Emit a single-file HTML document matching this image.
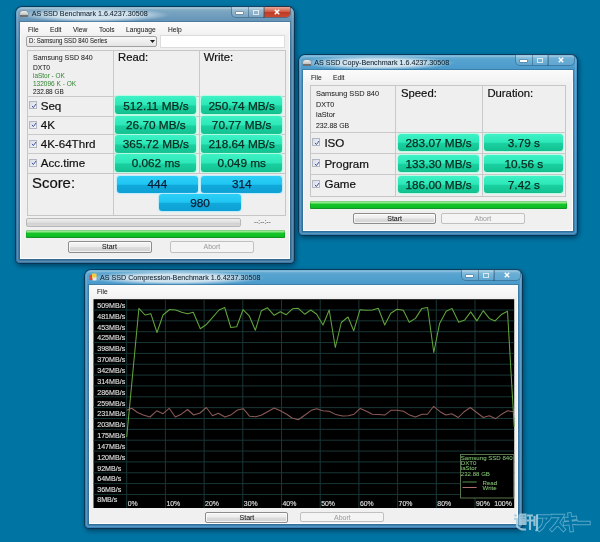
<!DOCTYPE html><html><head><meta charset="utf-8"><style>html,body{margin:0;padding:0;}body{width:600px;height:542px;overflow:hidden;position:relative;background:#0075a4;font-family:"Liberation Sans", sans-serif;}.t{position:absolute;white-space:nowrap;-webkit-text-stroke:0.2px currentColor;}</style></head><body><div style="position:absolute;left:0;top:0;width:600px;height:542px;filter:blur(0.3px)">
<div style="position:absolute;left:16px;top:7px;width:278px;height:256px;border-radius:6px 6px 4px 4px;box-shadow:1px 2px 5px 1px rgba(0,25,50,0.55);"></div>
<div style="position:absolute;left:16px;top:7px;width:278px;height:256px;border-radius:6px 6px 4px 4px;background:linear-gradient(to bottom,#9cbcd0 0px,#7ca6c2 4px,#6494b8 14px,#5088b0 40px,#3e78a2 100%);box-shadow:0 0 0 1px rgba(10,45,75,0.75);"></div>
<div style="position:absolute;left:18px;top:8px;width:152px;height:14px;border-radius:7px;background:radial-gradient(ellipse closest-side at center,rgba(215,230,240,0.95) 55%,rgba(215,230,240,0) 100%);"></div>
<div style="position:absolute;left:17px;top:8px;width:276px;height:254px;border-radius:5px 5px 3px 3px;box-shadow:inset 0 0 0 1px rgba(255,255,255,0.15);"></div>
<div style="position:absolute;left:20px;top:22px;width:270px;height:237px;background:#f0f0f0;box-shadow:inset 0 0 0 1px rgba(255,255,255,0.9),0 0 0 1px rgba(30,70,100,0.30);"></div>
<div style="position:absolute;left:20px;top:11px;width:8px;height:5px;border-radius:3px 3px 1px 1px;background:linear-gradient(#eeeeee,#b4b4b4);box-shadow:0 0 0 0.5px #888;"></div>
<div style="position:absolute;left:20px;top:15px;width:8px;height:2px;background:#707070;"></div>
<div class="t" style="left:31.70px;top:11.35px;font-size:7.15px;line-height:7.15px;color:#0e1e2a;-webkit-text-stroke:0.05px currentColor;">AS SSD Benchmark 1.6.4237.30508</div>
<div style="position:absolute;left:264px;top:7px;width:26px;height:10px;border-radius:0 0 4px 0;background:linear-gradient(#e8a898,#d06048 45%,#c03c28 55%,#c84a30);box-shadow:0 0 0 1px rgba(80,40,40,0.45);"></div>
<div style="position:absolute;left:232px;top:7px;width:32px;height:10px;border-radius:0 0 0 4px;background:linear-gradient(rgba(255,255,255,0.28),rgba(255,255,255,0.08));box-shadow:0 0 0 1px rgba(40,80,110,0.45);"></div>
<div style="position:absolute;left:248px;top:7px;width:0px;height:10px;border-left:1px solid rgba(40,80,110,0.45);"></div>
<svg style="position:absolute;left:273.0px;top:8px" width="8" height="8" viewBox="0 0 8 8"><path d="M1.8 1.8L6.2 6.2M6.2 1.8L1.8 6.2" stroke="#fff" stroke-width="1.5"/></svg>
<div style="position:absolute;left:253.0px;top:9.5px;width:4px;height:3px;border:1px solid rgba(255,255,255,0.7);"></div>
<div style="position:absolute;left:236.0px;top:12px;width:7px;height:2px;background:#fff;box-shadow:0 0 0 0.5px rgba(40,60,80,0.5);"></div>
<div style="position:absolute;left:20px;top:22px;width:270px;height:12px;background:linear-gradient(#fbfbfb,#f3f3f3);"></div>
<div class="t" style="left:28.30px;top:25.54px;font-size:7.4px;line-height:7.4px;color:#1a1a1a;transform:scaleX(0.9);transform-origin:left top;-webkit-text-stroke:0.05px currentColor;">File</div>
<div class="t" style="left:50.00px;top:25.54px;font-size:7.4px;line-height:7.4px;color:#1a1a1a;transform:scaleX(0.9);transform-origin:left top;-webkit-text-stroke:0.05px currentColor;">Edit</div>
<div class="t" style="left:72.50px;top:25.54px;font-size:7.4px;line-height:7.4px;color:#1a1a1a;transform:scaleX(0.9);transform-origin:left top;-webkit-text-stroke:0.05px currentColor;">View</div>
<div class="t" style="left:99.00px;top:25.54px;font-size:7.4px;line-height:7.4px;color:#1a1a1a;transform:scaleX(0.9);transform-origin:left top;-webkit-text-stroke:0.05px currentColor;">Tools</div>
<div class="t" style="left:125.80px;top:25.54px;font-size:7.4px;line-height:7.4px;color:#1a1a1a;transform:scaleX(0.9);transform-origin:left top;-webkit-text-stroke:0.05px currentColor;">Language</div>
<div class="t" style="left:167.50px;top:25.54px;font-size:7.4px;line-height:7.4px;color:#1a1a1a;transform:scaleX(0.9);transform-origin:left top;-webkit-text-stroke:0.05px currentColor;">Help</div>
<div style="position:absolute;left:26px;top:36px;width:129px;height:9px;border:1px solid #a0a0a0;border-radius:2px;background:linear-gradient(#f8f8f8,#e4e4e4);"></div>
<div class="t" style="left:29.20px;top:37.71px;font-size:6.6px;line-height:6.6px;color:#1a1a1a;transform:scaleX(0.92);transform-origin:left top;-webkit-text-stroke:0.05px currentColor;">D: Samsung SSD 840 Series</div>
<svg style="position:absolute;left:150px;top:39.5px" width="5" height="3" viewBox="0 0 5 3"><path d="M0 0H5L2.5 3Z" fill="#1a1a1a"/></svg>
<div style="position:absolute;left:160px;top:35px;width:123px;height:11px;border:1px solid #dcdcdc;background:#fff;"></div>
<div style="position:absolute;left:27px;top:50px;width:257px;height:122px;border:1px solid #c6c6c6;background:#efefef;"></div>
<div style="position:absolute;left:113px;top:50px;width:1px;height:123px;background:#c9c9c9;"></div>
<div style="position:absolute;left:199px;top:50px;width:1px;height:123px;background:#c9c9c9;"></div>
<div style="position:absolute;left:27px;top:96px;width:258px;height:1px;background:#c9c9c9;"></div>
<div style="position:absolute;left:27px;top:115.5px;width:258px;height:1px;background:#c9c9c9;"></div>
<div style="position:absolute;left:27px;top:134px;width:258px;height:1px;background:#c9c9c9;"></div>
<div style="position:absolute;left:27px;top:153px;width:258px;height:1px;background:#c9c9c9;"></div>
<div class="t" style="left:32.50px;top:53.74px;font-size:7.4px;line-height:7.4px;color:#222;transform:scaleX(0.95);transform-origin:left top;-webkit-text-stroke:0.05px currentColor;">Samsung SSD 840</div>
<div class="t" style="left:32.50px;top:63.74px;font-size:7.4px;line-height:7.4px;color:#222;transform:scaleX(0.9);transform-origin:left top;-webkit-text-stroke:0.05px currentColor;">DXT0</div>
<div class="t" style="left:32.50px;top:71.74px;font-size:7.4px;line-height:7.4px;color:#3a8a3a;transform:scaleX(0.87);transform-origin:left top;-webkit-text-stroke:0.05px currentColor;">iaStor - OK</div>
<div class="t" style="left:32.50px;top:79.74px;font-size:7.4px;line-height:7.4px;color:#3a8a3a;transform:scaleX(0.88);transform-origin:left top;-webkit-text-stroke:0.05px currentColor;">132096 K - OK</div>
<div class="t" style="left:32.50px;top:87.54px;font-size:7.4px;line-height:7.4px;color:#222;transform:scaleX(0.87);transform-origin:left top;-webkit-text-stroke:0.05px currentColor;">232.88 GB</div>
<div class="t" style="left:118.00px;top:52.23px;font-size:11.3px;line-height:11.3px;color:#111;">Read:</div>
<div class="t" style="left:203.80px;top:52.23px;font-size:11.3px;line-height:11.3px;color:#111;">Write:</div>
<div style="position:absolute;left:30.0px;top:102.3px;width:6px;height:6px;background:linear-gradient(135deg,#d6dbe4,#f6f7f9);box-shadow:0 0 0 1px #b0b6c2;"></div>
<svg style="position:absolute;left:29.5px;top:101.8px" width="8" height="8" viewBox="0 0 8 8"><path d="M2 3.9L3.4 5.6L6 2" fill="none" stroke="#4252a0" stroke-width="1.0"/></svg>
<div class="t" style="left:40.70px;top:99.88px;font-size:11.6px;line-height:11.6px;color:#111;">Seq</div>
<div style="position:absolute;left:115.3px;top:96.3px;width:81.2px;height:18.0px;border-radius:3px;background:linear-gradient(to bottom,#3ef2c6 0%,#2de8b9 48%,#1ad0a0 56%,#14c493 92%,#12b888 100%);box-shadow:0 0 1px 1px rgba(170,255,225,0.85);"></div>
<div class="t" style="left:115.30px;top:100.68px;width:81.2px;text-align:center;font-size:11.8px;line-height:11.8px;color:#0a2a1e;-webkit-text-stroke:0.25px #0a2a1e;">512.11 MB/s</div>
<div style="position:absolute;left:201.4px;top:96.3px;width:80.6px;height:18.0px;border-radius:3px;background:linear-gradient(to bottom,#3ef2c6 0%,#2de8b9 48%,#1ad0a0 56%,#14c493 92%,#12b888 100%);box-shadow:0 0 1px 1px rgba(170,255,225,0.85);"></div>
<div class="t" style="left:201.40px;top:100.68px;width:80.6px;text-align:center;font-size:11.8px;line-height:11.8px;color:#0a2a1e;-webkit-text-stroke:0.25px #0a2a1e;">250.74 MB/s</div>
<div style="position:absolute;left:30.0px;top:121.8px;width:6px;height:6px;background:linear-gradient(135deg,#d6dbe4,#f6f7f9);box-shadow:0 0 0 1px #b0b6c2;"></div>
<svg style="position:absolute;left:29.5px;top:121.3px" width="8" height="8" viewBox="0 0 8 8"><path d="M2 3.9L3.4 5.6L6 2" fill="none" stroke="#4252a0" stroke-width="1.0"/></svg>
<div class="t" style="left:40.70px;top:119.38px;font-size:11.6px;line-height:11.6px;color:#111;">4K</div>
<div style="position:absolute;left:115.3px;top:115.8px;width:81.2px;height:18.000000000000014px;border-radius:3px;background:linear-gradient(to bottom,#3ef2c6 0%,#2de8b9 48%,#1ad0a0 56%,#14c493 92%,#12b888 100%);box-shadow:0 0 1px 1px rgba(170,255,225,0.85);"></div>
<div class="t" style="left:115.30px;top:120.18px;width:81.2px;text-align:center;font-size:11.8px;line-height:11.8px;color:#0a2a1e;-webkit-text-stroke:0.25px #0a2a1e;">26.70 MB/s</div>
<div style="position:absolute;left:201.4px;top:115.8px;width:80.6px;height:18.000000000000014px;border-radius:3px;background:linear-gradient(to bottom,#3ef2c6 0%,#2de8b9 48%,#1ad0a0 56%,#14c493 92%,#12b888 100%);box-shadow:0 0 1px 1px rgba(170,255,225,0.85);"></div>
<div class="t" style="left:201.40px;top:120.18px;width:80.6px;text-align:center;font-size:11.8px;line-height:11.8px;color:#0a2a1e;-webkit-text-stroke:0.25px #0a2a1e;">70.77 MB/s</div>
<div style="position:absolute;left:30.0px;top:140.8px;width:6px;height:6px;background:linear-gradient(135deg,#d6dbe4,#f6f7f9);box-shadow:0 0 0 1px #b0b6c2;"></div>
<svg style="position:absolute;left:29.5px;top:140.3px" width="8" height="8" viewBox="0 0 8 8"><path d="M2 3.9L3.4 5.6L6 2" fill="none" stroke="#4252a0" stroke-width="1.0"/></svg>
<div class="t" style="left:40.70px;top:138.38px;font-size:11.6px;line-height:11.6px;color:#111;">4K-64Thrd</div>
<div style="position:absolute;left:115.3px;top:134.8px;width:81.2px;height:18.0px;border-radius:3px;background:linear-gradient(to bottom,#3ef2c6 0%,#2de8b9 48%,#1ad0a0 56%,#14c493 92%,#12b888 100%);box-shadow:0 0 1px 1px rgba(170,255,225,0.85);"></div>
<div class="t" style="left:115.30px;top:139.18px;width:81.2px;text-align:center;font-size:11.8px;line-height:11.8px;color:#0a2a1e;-webkit-text-stroke:0.25px #0a2a1e;">365.72 MB/s</div>
<div style="position:absolute;left:201.4px;top:134.8px;width:80.6px;height:18.0px;border-radius:3px;background:linear-gradient(to bottom,#3ef2c6 0%,#2de8b9 48%,#1ad0a0 56%,#14c493 92%,#12b888 100%);box-shadow:0 0 1px 1px rgba(170,255,225,0.85);"></div>
<div class="t" style="left:201.40px;top:139.18px;width:80.6px;text-align:center;font-size:11.8px;line-height:11.8px;color:#0a2a1e;-webkit-text-stroke:0.25px #0a2a1e;">218.64 MB/s</div>
<div style="position:absolute;left:30.0px;top:159.8px;width:6px;height:6px;background:linear-gradient(135deg,#d6dbe4,#f6f7f9);box-shadow:0 0 0 1px #b0b6c2;"></div>
<svg style="position:absolute;left:29.5px;top:159.3px" width="8" height="8" viewBox="0 0 8 8"><path d="M2 3.9L3.4 5.6L6 2" fill="none" stroke="#4252a0" stroke-width="1.0"/></svg>
<div class="t" style="left:40.70px;top:157.38px;font-size:11.6px;line-height:11.6px;color:#111;">Acc.time</div>
<div style="position:absolute;left:115.3px;top:153.8px;width:81.2px;height:18.0px;border-radius:3px;background:linear-gradient(to bottom,#3ef2c6 0%,#2de8b9 48%,#1ad0a0 56%,#14c493 92%,#12b888 100%);box-shadow:0 0 1px 1px rgba(170,255,225,0.85);"></div>
<div class="t" style="left:115.30px;top:158.18px;width:81.2px;text-align:center;font-size:11.8px;line-height:11.8px;color:#0a2a1e;-webkit-text-stroke:0.25px #0a2a1e;">0.062 ms</div>
<div style="position:absolute;left:201.4px;top:153.8px;width:80.6px;height:18.0px;border-radius:3px;background:linear-gradient(to bottom,#3ef2c6 0%,#2de8b9 48%,#1ad0a0 56%,#14c493 92%,#12b888 100%);box-shadow:0 0 1px 1px rgba(170,255,225,0.85);"></div>
<div class="t" style="left:201.40px;top:158.18px;width:80.6px;text-align:center;font-size:11.8px;line-height:11.8px;color:#0a2a1e;-webkit-text-stroke:0.25px #0a2a1e;">0.049 ms</div>
<div style="position:absolute;left:27px;top:173px;width:257px;height:41px;border:1px solid #c6c6c6;background:#efefef;"></div>
<div style="position:absolute;left:113px;top:173px;width:1px;height:42px;background:#c9c9c9;"></div>
<div class="t" style="left:32.00px;top:175.59px;font-size:14.9px;line-height:14.9px;color:#111;">Score:</div>
<div style="position:absolute;left:117px;top:176px;width:80.80000000000001px;height:16.5px;border-radius:3px;background:linear-gradient(to bottom,#2ccff6 0%,#20c6f2 48%,#10a8da 56%,#0ea0d4 100%);box-shadow:0 0 1px 1px rgba(170,235,255,0.75);"></div>
<div class="t" style="left:117.00px;top:179.23px;width:80.80000000000001px;text-align:center;font-size:11.8px;line-height:11.8px;color:#0a1c36;-webkit-text-stroke:0.25px #0a1c36;">444</div>
<div style="position:absolute;left:201.4px;top:176px;width:80.79999999999998px;height:16.5px;border-radius:3px;background:linear-gradient(to bottom,#2ccff6 0%,#20c6f2 48%,#10a8da 56%,#0ea0d4 100%);box-shadow:0 0 1px 1px rgba(170,235,255,0.75);"></div>
<div class="t" style="left:201.40px;top:179.23px;width:80.79999999999998px;text-align:center;font-size:11.8px;line-height:11.8px;color:#0a1c36;-webkit-text-stroke:0.25px #0a1c36;">314</div>
<div style="position:absolute;left:159.3px;top:194.2px;width:81.5px;height:17.30000000000001px;border-radius:3px;background:linear-gradient(to bottom,#2ccff6 0%,#20c6f2 48%,#10a8da 56%,#0ea0d4 100%);box-shadow:0 0 1px 1px rgba(170,235,255,0.75);"></div>
<div class="t" style="left:159.30px;top:197.83px;width:81.5px;text-align:center;font-size:11.8px;line-height:11.8px;color:#0a1c36;-webkit-text-stroke:0.25px #0a1c36;">980</div>
<div style="position:absolute;left:26px;top:218px;width:213px;height:7px;border:1px solid #b8b8b8;border-radius:2px;background:linear-gradient(#f0f0f0,#dedede 50%,#d0d0d0 51%,#d8d8d8);"></div>
<div class="t" style="left:254.00px;top:219.00px;font-size:6.5px;line-height:6.5px;color:#444;-webkit-text-stroke:0.05px currentColor;">--:--:--</div>
<div style="position:absolute;left:26px;top:229.5px;width:259px;height:8.800000000000011px;border-radius:1px;background:linear-gradient(to bottom,#b4f4b0 0%,#8ae886 22%,#16c42a 42%,#0cc022 78%,#1a9a2a 100%);box-shadow:inset 0 0 0 1px rgba(0,90,20,0.22);"></div>
<div style="position:absolute;left:67.5px;top:241px;width:82.0px;height:9.5px;border:1px solid #8c8c8c;border-radius:2px;background:linear-gradient(#f6f6f6 0%,#ececec 48%,#dddddd 52%,#d2d2d2 100%);box-shadow:inset 0 0 0 1px rgba(255,255,255,0.7);"></div>
<div class="t" style="left:67.50px;top:243.42px;width:84.0px;text-align:center;font-size:7px;line-height:7px;color:#111;-webkit-text-stroke:0.05px currentColor;">Start</div>
<div style="position:absolute;left:170px;top:241px;width:81.69999999999999px;height:9.5px;border:1px solid #c0c0c0;border-radius:2px;background:#f4f4f4;"></div>
<div class="t" style="left:170.00px;top:243.42px;width:83.69999999999999px;text-align:center;font-size:7px;line-height:7px;color:#a0a0a0;-webkit-text-stroke:0.05px currentColor;">Abort</div>
<div style="position:absolute;left:299px;top:55px;width:278px;height:180px;border-radius:6px 6px 4px 4px;box-shadow:1px 2px 5px 1px rgba(0,25,50,0.55);"></div>
<div style="position:absolute;left:299px;top:55px;width:278px;height:180px;border-radius:6px 6px 4px 4px;background:linear-gradient(to bottom,#80b8d8 0px,#58a4d0 4px,#4a9acb 14px,#4592c4 30px,#3a82b4 100%);box-shadow:0 0 0 1px rgba(10,45,75,0.75);"></div>
<div style="position:absolute;left:301px;top:56px;width:154px;height:14px;border-radius:7px;background:radial-gradient(ellipse closest-side at center,rgba(215,230,240,0.95) 55%,rgba(215,230,240,0) 100%);"></div>
<div style="position:absolute;left:300px;top:56px;width:276px;height:178px;border-radius:5px 5px 3px 3px;box-shadow:inset 0 0 0 1px rgba(255,255,255,0.15);"></div>
<div style="position:absolute;left:303px;top:70px;width:270px;height:161px;background:#f0f0f0;box-shadow:inset 0 0 0 1px rgba(255,255,255,0.9),0 0 0 1px rgba(30,70,100,0.30);"></div>
<div style="position:absolute;left:303px;top:59.5px;width:8px;height:5px;border-radius:3px 3px 1px 1px;background:linear-gradient(#eeeeee,#b4b4b4);box-shadow:0 0 0 0.5px #888;"></div>
<div style="position:absolute;left:303px;top:63.5px;width:8px;height:2px;background:#707070;"></div>
<div class="t" style="left:314.20px;top:60.35px;font-size:7.15px;line-height:7.15px;color:#0e1e2a;-webkit-text-stroke:0.05px currentColor;">AS SSD Copy-Benchmark 1.6.4237.30508</div>
<div style="position:absolute;left:548px;top:55px;width:26px;height:10px;border-radius:0 0 4px 0;background:rgba(255,255,255,0.10);box-shadow:0 0 0 1px rgba(40,80,110,0.45);"></div>
<div style="position:absolute;left:516px;top:55px;width:32px;height:10px;border-radius:0 0 0 4px;background:linear-gradient(rgba(255,255,255,0.28),rgba(255,255,255,0.08));box-shadow:0 0 0 1px rgba(40,80,110,0.45);"></div>
<div style="position:absolute;left:532px;top:55px;width:0px;height:10px;border-left:1px solid rgba(40,80,110,0.45);"></div>
<svg style="position:absolute;left:557.0px;top:56px" width="8" height="8" viewBox="0 0 8 8"><path d="M1.8 1.8L6.2 6.2M6.2 1.8L1.8 6.2" stroke="#fff" stroke-width="1.5"/></svg>
<div style="position:absolute;left:537.0px;top:57.5px;width:4px;height:3px;border:1px solid rgba(255,255,255,0.7);"></div>
<div style="position:absolute;left:520.0px;top:60px;width:7px;height:2px;background:#fff;box-shadow:0 0 0 0.5px rgba(40,60,80,0.5);"></div>
<div style="position:absolute;left:303px;top:70px;width:270px;height:12px;background:linear-gradient(#fbfbfb,#f3f3f3);"></div>
<div class="t" style="left:311.30px;top:74.04px;font-size:7.4px;line-height:7.4px;color:#1a1a1a;transform:scaleX(0.9);transform-origin:left top;-webkit-text-stroke:0.05px currentColor;">File</div>
<div class="t" style="left:333.00px;top:74.04px;font-size:7.4px;line-height:7.4px;color:#1a1a1a;transform:scaleX(0.9);transform-origin:left top;-webkit-text-stroke:0.05px currentColor;">Edit</div>
<div style="position:absolute;left:310px;top:85px;width:254px;height:110px;border:1px solid #c6c6c6;background:#efefef;"></div>
<div style="position:absolute;left:395.3px;top:85px;width:1px;height:111px;background:#c9c9c9;"></div>
<div style="position:absolute;left:481.7px;top:85px;width:1px;height:111px;background:#c9c9c9;"></div>
<div style="position:absolute;left:310px;top:132px;width:255.5px;height:1px;background:#c9c9c9;"></div>
<div style="position:absolute;left:310px;top:153.3px;width:255.5px;height:1px;background:#c9c9c9;"></div>
<div style="position:absolute;left:310px;top:173.5px;width:255.5px;height:1px;background:#c9c9c9;"></div>
<div class="t" style="left:316.00px;top:89.60px;font-size:7.8px;line-height:7.8px;color:#222;transform:scaleX(0.95);transform-origin:left top;-webkit-text-stroke:0.05px currentColor;">Samsung SSD 840</div>
<div class="t" style="left:316.00px;top:100.60px;font-size:7.8px;line-height:7.8px;color:#222;transform:scaleX(0.92);transform-origin:left top;-webkit-text-stroke:0.05px currentColor;">DXT0</div>
<div class="t" style="left:316.00px;top:111.40px;font-size:7.8px;line-height:7.8px;color:#222;transform:scaleX(0.94);transform-origin:left top;-webkit-text-stroke:0.05px currentColor;">iaStor</div>
<div class="t" style="left:316.00px;top:121.70px;font-size:7.8px;line-height:7.8px;color:#222;transform:scaleX(0.89);transform-origin:left top;-webkit-text-stroke:0.05px currentColor;">232.88 GB</div>
<div class="t" style="left:401.00px;top:87.73px;font-size:11.3px;line-height:11.3px;color:#111;">Speed:</div>
<div class="t" style="left:487.40px;top:87.73px;font-size:11.3px;line-height:11.3px;color:#111;">Duration:</div>
<div style="position:absolute;left:313.3px;top:139.3px;width:6px;height:6px;background:linear-gradient(135deg,#d6dbe4,#f6f7f9);box-shadow:0 0 0 1px #b0b6c2;"></div>
<svg style="position:absolute;left:312.8px;top:138.8px" width="8" height="8" viewBox="0 0 8 8"><path d="M2 3.9L3.4 5.6L6 2" fill="none" stroke="#4252a0" stroke-width="1.0"/></svg>
<div class="t" style="left:324.40px;top:136.68px;font-size:11.6px;line-height:11.6px;color:#111;">ISO</div>
<div style="position:absolute;left:398.2px;top:133.8px;width:80.80000000000001px;height:17.0px;border-radius:3px;background:linear-gradient(to bottom,#3ef2c6 0%,#2de8b9 48%,#1ad0a0 56%,#14c493 92%,#12b888 100%);box-shadow:0 0 1px 1px rgba(170,255,225,0.85);"></div>
<div class="t" style="left:398.20px;top:137.68px;width:80.80000000000001px;text-align:center;font-size:11.8px;line-height:11.8px;color:#0a2a1e;-webkit-text-stroke:0.25px #0a2a1e;">283.07 MB/s</div>
<div style="position:absolute;left:484.4px;top:133.8px;width:79.0px;height:17.0px;border-radius:3px;background:linear-gradient(to bottom,#3ef2c6 0%,#2de8b9 48%,#1ad0a0 56%,#14c493 92%,#12b888 100%);box-shadow:0 0 1px 1px rgba(170,255,225,0.85);"></div>
<div class="t" style="left:484.40px;top:137.68px;width:79.0px;text-align:center;font-size:11.8px;line-height:11.8px;color:#0a2a1e;-webkit-text-stroke:0.25px #0a2a1e;">3.79 s</div>
<div style="position:absolute;left:313.3px;top:160.3px;width:6px;height:6px;background:linear-gradient(135deg,#d6dbe4,#f6f7f9);box-shadow:0 0 0 1px #b0b6c2;"></div>
<svg style="position:absolute;left:312.8px;top:159.8px" width="8" height="8" viewBox="0 0 8 8"><path d="M2 3.9L3.4 5.6L6 2" fill="none" stroke="#4252a0" stroke-width="1.0"/></svg>
<div class="t" style="left:324.40px;top:157.68px;font-size:11.6px;line-height:11.6px;color:#111;">Program</div>
<div style="position:absolute;left:398.2px;top:154.8px;width:80.80000000000001px;height:17.099999999999994px;border-radius:3px;background:linear-gradient(to bottom,#3ef2c6 0%,#2de8b9 48%,#1ad0a0 56%,#14c493 92%,#12b888 100%);box-shadow:0 0 1px 1px rgba(170,255,225,0.85);"></div>
<div class="t" style="left:398.20px;top:158.73px;width:80.80000000000001px;text-align:center;font-size:11.8px;line-height:11.8px;color:#0a2a1e;-webkit-text-stroke:0.25px #0a2a1e;">133.30 MB/s</div>
<div style="position:absolute;left:484.4px;top:154.8px;width:79.0px;height:17.099999999999994px;border-radius:3px;background:linear-gradient(to bottom,#3ef2c6 0%,#2de8b9 48%,#1ad0a0 56%,#14c493 92%,#12b888 100%);box-shadow:0 0 1px 1px rgba(170,255,225,0.85);"></div>
<div class="t" style="left:484.40px;top:158.73px;width:79.0px;text-align:center;font-size:11.8px;line-height:11.8px;color:#0a2a1e;-webkit-text-stroke:0.25px #0a2a1e;">10.56 s</div>
<div style="position:absolute;left:313.3px;top:181.1px;width:6px;height:6px;background:linear-gradient(135deg,#d6dbe4,#f6f7f9);box-shadow:0 0 0 1px #b0b6c2;"></div>
<svg style="position:absolute;left:312.8px;top:180.6px" width="8" height="8" viewBox="0 0 8 8"><path d="M2 3.9L3.4 5.6L6 2" fill="none" stroke="#4252a0" stroke-width="1.0"/></svg>
<div class="t" style="left:324.40px;top:178.48px;font-size:11.6px;line-height:11.6px;color:#111;">Game</div>
<div style="position:absolute;left:398.2px;top:175.6px;width:80.80000000000001px;height:17.700000000000017px;border-radius:3px;background:linear-gradient(to bottom,#3ef2c6 0%,#2de8b9 48%,#1ad0a0 56%,#14c493 92%,#12b888 100%);box-shadow:0 0 1px 1px rgba(170,255,225,0.85);"></div>
<div class="t" style="left:398.20px;top:179.83px;width:80.80000000000001px;text-align:center;font-size:11.8px;line-height:11.8px;color:#0a2a1e;-webkit-text-stroke:0.25px #0a2a1e;">186.00 MB/s</div>
<div style="position:absolute;left:484.4px;top:175.6px;width:79.0px;height:17.700000000000017px;border-radius:3px;background:linear-gradient(to bottom,#3ef2c6 0%,#2de8b9 48%,#1ad0a0 56%,#14c493 92%,#12b888 100%);box-shadow:0 0 1px 1px rgba(170,255,225,0.85);"></div>
<div class="t" style="left:484.40px;top:179.83px;width:79.0px;text-align:center;font-size:11.8px;line-height:11.8px;color:#0a2a1e;-webkit-text-stroke:0.25px #0a2a1e;">7.42 s</div>
<div style="position:absolute;left:309.7px;top:201.3px;width:257.00000000000006px;height:7.899999999999977px;border-radius:1px;background:linear-gradient(to bottom,#b4f4b0 0%,#8ae886 22%,#16c42a 42%,#0cc022 78%,#1a9a2a 100%);box-shadow:inset 0 0 0 1px rgba(0,90,20,0.22);"></div>
<div style="position:absolute;left:352.8px;top:212.7px;width:81.69999999999999px;height:9.600000000000023px;border:1px solid #8c8c8c;border-radius:2px;background:linear-gradient(#f6f6f6 0%,#ececec 48%,#dddddd 52%,#d2d2d2 100%);box-shadow:inset 0 0 0 1px rgba(255,255,255,0.7);"></div>
<div class="t" style="left:352.80px;top:215.17px;width:83.69999999999999px;text-align:center;font-size:7px;line-height:7px;color:#111;-webkit-text-stroke:0.05px currentColor;">Start</div>
<div style="position:absolute;left:441px;top:213px;width:81.70000000000005px;height:9.300000000000011px;border:1px solid #c0c0c0;border-radius:2px;background:#f4f4f4;"></div>
<div class="t" style="left:441.00px;top:215.32px;width:83.70000000000005px;text-align:center;font-size:7px;line-height:7px;color:#a0a0a0;-webkit-text-stroke:0.05px currentColor;">Abort</div>
<div style="position:absolute;left:85px;top:270px;width:437px;height:258px;border-radius:6px 6px 4px 4px;box-shadow:1px 2px 5px 1px rgba(0,25,50,0.55);"></div>
<div style="position:absolute;left:85px;top:270px;width:437px;height:258px;border-radius:6px 6px 4px 4px;background:linear-gradient(to bottom,#80b8d8 0px,#58a4d0 4px,#4a9acb 14px,#4592c4 30px,#3a82b4 100%);box-shadow:0 0 0 1px rgba(10,45,75,0.75);"></div>
<div style="position:absolute;left:87px;top:271px;width:178px;height:14px;border-radius:7px;background:radial-gradient(ellipse closest-side at center,rgba(215,230,240,0.95) 55%,rgba(215,230,240,0) 100%);"></div>
<div style="position:absolute;left:86px;top:271px;width:435px;height:256px;border-radius:5px 5px 3px 3px;box-shadow:inset 0 0 0 1px rgba(255,255,255,0.15);"></div>
<div style="position:absolute;left:89px;top:285px;width:429px;height:239px;background:#f0f0f0;box-shadow:inset 0 0 0 1px rgba(255,255,255,0.9),0 0 0 1px rgba(30,70,100,0.30);"></div>
<svg style="position:absolute;left:89px;top:273px" width="8" height="8" viewBox="0 0 8 8"><rect x="0.5" y="2" width="4" height="5" fill="#d84a3a"/><rect x="3" y="0.5" width="4.5" height="4.5" fill="#f0d040"/><rect x="3.5" y="4.5" width="4" height="3" fill="#e8e8f0"/></svg>
<div class="t" style="left:100.00px;top:274.75px;font-size:7.15px;line-height:7.15px;color:#0e1e2a;-webkit-text-stroke:0.05px currentColor;">AS SSD Compression-Benchmark 1.6.4237.30508</div>
<div style="position:absolute;left:494px;top:270px;width:26px;height:10px;border-radius:0 0 4px 0;background:rgba(255,255,255,0.10);box-shadow:0 0 0 1px rgba(40,80,110,0.45);"></div>
<div style="position:absolute;left:462px;top:270px;width:32px;height:10px;border-radius:0 0 0 4px;background:linear-gradient(rgba(255,255,255,0.28),rgba(255,255,255,0.08));box-shadow:0 0 0 1px rgba(40,80,110,0.45);"></div>
<div style="position:absolute;left:478px;top:270px;width:0px;height:10px;border-left:1px solid rgba(40,80,110,0.45);"></div>
<svg style="position:absolute;left:503.0px;top:271px" width="8" height="8" viewBox="0 0 8 8"><path d="M1.8 1.8L6.2 6.2M6.2 1.8L1.8 6.2" stroke="#fff" stroke-width="1.5"/></svg>
<div style="position:absolute;left:483.0px;top:272.5px;width:4px;height:3px;border:1px solid rgba(255,255,255,0.7);"></div>
<div style="position:absolute;left:466.0px;top:275px;width:7px;height:2px;background:#fff;box-shadow:0 0 0 0.5px rgba(40,60,80,0.5);"></div>
<div style="position:absolute;left:89px;top:285px;width:429px;height:12px;background:linear-gradient(#fbfbfb,#f3f3f3);"></div>
<div class="t" style="left:96.70px;top:288.44px;font-size:7.4px;line-height:7.4px;color:#1a1a1a;transform:scaleX(0.9);transform-origin:left top;-webkit-text-stroke:0.05px currentColor;">File</div>
<svg style="position:absolute;left:0;top:0" width="600" height="542" viewBox="0 0 600 542"><rect x="93.5" y="299.2" width="420.70000000000005" height="208.8" fill="#000"/><line x1="93.5" y1="310.00" x2="514.2" y2="310.00" stroke="#193636" stroke-width="1"/><line x1="93.5" y1="320.85" x2="514.2" y2="320.85" stroke="#193636" stroke-width="1"/><line x1="93.5" y1="331.70" x2="514.2" y2="331.70" stroke="#193636" stroke-width="1"/><line x1="93.5" y1="342.55" x2="514.2" y2="342.55" stroke="#193636" stroke-width="1"/><line x1="93.5" y1="353.40" x2="514.2" y2="353.40" stroke="#193636" stroke-width="1"/><line x1="93.5" y1="364.25" x2="514.2" y2="364.25" stroke="#193636" stroke-width="1"/><line x1="93.5" y1="375.10" x2="514.2" y2="375.10" stroke="#193636" stroke-width="1"/><line x1="93.5" y1="385.95" x2="514.2" y2="385.95" stroke="#193636" stroke-width="1"/><line x1="93.5" y1="396.80" x2="514.2" y2="396.80" stroke="#193636" stroke-width="1"/><line x1="93.5" y1="407.65" x2="514.2" y2="407.65" stroke="#193636" stroke-width="1"/><line x1="93.5" y1="418.50" x2="514.2" y2="418.50" stroke="#193636" stroke-width="1"/><line x1="93.5" y1="429.35" x2="514.2" y2="429.35" stroke="#193636" stroke-width="1"/><line x1="93.5" y1="440.20" x2="514.2" y2="440.20" stroke="#193636" stroke-width="1"/><line x1="93.5" y1="451.05" x2="514.2" y2="451.05" stroke="#193636" stroke-width="1"/><line x1="93.5" y1="461.90" x2="514.2" y2="461.90" stroke="#193636" stroke-width="1"/><line x1="93.5" y1="472.75" x2="514.2" y2="472.75" stroke="#193636" stroke-width="1"/><line x1="93.5" y1="483.60" x2="514.2" y2="483.60" stroke="#193636" stroke-width="1"/><line x1="93.5" y1="494.45" x2="514.2" y2="494.45" stroke="#193636" stroke-width="1"/><line x1="126.70" y1="299.2" x2="126.70" y2="508" stroke="#193636" stroke-width="1"/><line x1="165.40" y1="299.2" x2="165.40" y2="508" stroke="#193636" stroke-width="1"/><line x1="204.10" y1="299.2" x2="204.10" y2="508" stroke="#193636" stroke-width="1"/><line x1="242.80" y1="299.2" x2="242.80" y2="508" stroke="#193636" stroke-width="1"/><line x1="281.50" y1="299.2" x2="281.50" y2="508" stroke="#193636" stroke-width="1"/><line x1="320.20" y1="299.2" x2="320.20" y2="508" stroke="#193636" stroke-width="1"/><line x1="358.90" y1="299.2" x2="358.90" y2="508" stroke="#193636" stroke-width="1"/><line x1="397.60" y1="299.2" x2="397.60" y2="508" stroke="#193636" stroke-width="1"/><line x1="436.30" y1="299.2" x2="436.30" y2="508" stroke="#193636" stroke-width="1"/><line x1="475.00" y1="299.2" x2="475.00" y2="508" stroke="#193636" stroke-width="1"/><polyline points="126.7,410.3 131.7,408.3 137.5,412.5 143.3,415.0 150.0,417.0 156.7,410.8 163.0,413.7 169.2,408.3 175.3,417.0 181.3,414.2 187.5,409.5 193.7,415.0 200.0,413.0 206.3,407.5 212.5,415.8 218.3,413.3 225.0,417.0 231.3,414.7 237.5,410.0 243.3,408.7 249.7,416.3 255.8,416.7 261.7,415.0 267.5,411.7 274.2,408.0 280.3,410.8 286.7,414.2 292.0,418.0 298.3,419.7 305.0,415.0 311.3,410.3 316.7,408.8 322.5,410.7 329.2,411.3 335.9,414.6 342.6,416.1 348.3,415.7 354.1,414.2 360.2,408.4 366.5,411.3 372.3,414.2 378.6,414.6 384.8,415.1 390.9,410.3 397.2,410.3 403.5,411.3 409.7,415.1 415.4,417.0 422.1,414.2 427.5,414.2 433.7,406.3 440.0,411.7 445.8,415.0 451.7,413.7 458.3,417.5 464.2,411.7 470.3,407.5 476.7,412.5 483.3,417.5 489.2,415.8 495.8,418.7 501.7,414.2 507.5,410.8 513.3,411.7" fill="none" stroke="#8a5a56" stroke-width="1.05" stroke-linejoin="round"/><polyline points="126.7,437.0 138.9,308.3 145.0,315.0 150.8,313.7 157.0,332.5 163.0,315.0 169.7,309.5 175.8,310.0 181.7,312.2 187.5,313.8 193.3,312.2 200.3,328.7 206.7,324.2 213.3,316.7 219.0,310.0 224.7,307.5 230.8,327.5 236.7,326.7 243.0,309.7 249.2,315.8 255.3,330.3 261.3,310.8 267.5,307.8 274.2,315.3 280.3,311.7 286.3,314.7 292.5,308.8 298.3,308.3 304.7,314.2 310.8,310.0 316.7,314.2 323.0,325.0 329.2,310.0 335.3,347.5 341.3,322.5 348.0,317.0 353.7,330.8 360.0,309.7 366.3,310.3 372.5,310.0 378.3,308.3 384.7,325.0 390.8,313.3 397.0,309.2 403.3,310.3 409.2,322.2 415.5,318.4 421.9,308.4 427.6,307.5 433.8,352.5 439.5,323.8 446.2,311.3 452.0,308.4 458.7,322.2 464.8,319.9 470.7,311.9 476.9,320.9 483.2,310.7 489.3,318.4 495.1,320.9 501.8,314.2 507.5,311.3 514.2,426.7" fill="none" stroke="#62a43c" stroke-width="1.05" stroke-linejoin="round"/><rect x="460.5" y="454.5" width="53.2" height="43.5" fill="#000" stroke="#56744e" stroke-width="1"/><line x1="462.5" y1="482" x2="476.7" y2="482" stroke="#5a9048" stroke-width="1"/><line x1="462.5" y1="487.5" x2="476.7" y2="487.5" stroke="#b07070" stroke-width="1"/></svg>
<div class="t" style="left:97.20px;top:302.89px;font-size:7.1px;line-height:7.1px;color:#dedede;-webkit-text-stroke:0.15px #dedede;">509MB/s</div>
<div class="t" style="left:97.20px;top:313.74px;font-size:7.1px;line-height:7.1px;color:#dedede;-webkit-text-stroke:0.15px #dedede;">481MB/s</div>
<div class="t" style="left:97.20px;top:324.59px;font-size:7.1px;line-height:7.1px;color:#dedede;-webkit-text-stroke:0.15px #dedede;">453MB/s</div>
<div class="t" style="left:97.20px;top:335.44px;font-size:7.1px;line-height:7.1px;color:#dedede;-webkit-text-stroke:0.15px #dedede;">425MB/s</div>
<div class="t" style="left:97.20px;top:346.29px;font-size:7.1px;line-height:7.1px;color:#dedede;-webkit-text-stroke:0.15px #dedede;">398MB/s</div>
<div class="t" style="left:97.20px;top:357.14px;font-size:7.1px;line-height:7.1px;color:#dedede;-webkit-text-stroke:0.15px #dedede;">370MB/s</div>
<div class="t" style="left:97.20px;top:367.99px;font-size:7.1px;line-height:7.1px;color:#dedede;-webkit-text-stroke:0.15px #dedede;">342MB/s</div>
<div class="t" style="left:97.20px;top:378.84px;font-size:7.1px;line-height:7.1px;color:#dedede;-webkit-text-stroke:0.15px #dedede;">314MB/s</div>
<div class="t" style="left:97.20px;top:389.69px;font-size:7.1px;line-height:7.1px;color:#dedede;-webkit-text-stroke:0.15px #dedede;">286MB/s</div>
<div class="t" style="left:97.20px;top:400.54px;font-size:7.1px;line-height:7.1px;color:#dedede;-webkit-text-stroke:0.15px #dedede;">259MB/s</div>
<div class="t" style="left:97.20px;top:411.39px;font-size:7.1px;line-height:7.1px;color:#dedede;-webkit-text-stroke:0.15px #dedede;">231MB/s</div>
<div class="t" style="left:97.20px;top:422.24px;font-size:7.1px;line-height:7.1px;color:#dedede;-webkit-text-stroke:0.15px #dedede;">203MB/s</div>
<div class="t" style="left:97.20px;top:433.09px;font-size:7.1px;line-height:7.1px;color:#dedede;-webkit-text-stroke:0.15px #dedede;">175MB/s</div>
<div class="t" style="left:97.20px;top:443.94px;font-size:7.1px;line-height:7.1px;color:#dedede;-webkit-text-stroke:0.15px #dedede;">147MB/s</div>
<div class="t" style="left:97.20px;top:454.79px;font-size:7.1px;line-height:7.1px;color:#dedede;-webkit-text-stroke:0.15px #dedede;">120MB/s</div>
<div class="t" style="left:97.20px;top:465.64px;font-size:7.1px;line-height:7.1px;color:#dedede;-webkit-text-stroke:0.15px #dedede;">92MB/s</div>
<div class="t" style="left:97.20px;top:476.49px;font-size:7.1px;line-height:7.1px;color:#dedede;-webkit-text-stroke:0.15px #dedede;">64MB/s</div>
<div class="t" style="left:97.20px;top:487.34px;font-size:7.1px;line-height:7.1px;color:#dedede;-webkit-text-stroke:0.15px #dedede;">36MB/s</div>
<div class="t" style="left:97.20px;top:497.49px;font-size:7.1px;line-height:7.1px;color:#dedede;-webkit-text-stroke:0.15px #dedede;">8MB/s</div>
<div class="t" style="left:127.70px;top:501.16px;font-size:6.9px;line-height:6.9px;color:#dedede;-webkit-text-stroke:0.15px #dedede;">0%</div>
<div class="t" style="left:166.40px;top:501.16px;font-size:6.9px;line-height:6.9px;color:#dedede;-webkit-text-stroke:0.15px #dedede;">10%</div>
<div class="t" style="left:205.10px;top:501.16px;font-size:6.9px;line-height:6.9px;color:#dedede;-webkit-text-stroke:0.15px #dedede;">20%</div>
<div class="t" style="left:243.80px;top:501.16px;font-size:6.9px;line-height:6.9px;color:#dedede;-webkit-text-stroke:0.15px #dedede;">30%</div>
<div class="t" style="left:282.50px;top:501.16px;font-size:6.9px;line-height:6.9px;color:#dedede;-webkit-text-stroke:0.15px #dedede;">40%</div>
<div class="t" style="left:321.20px;top:501.16px;font-size:6.9px;line-height:6.9px;color:#dedede;-webkit-text-stroke:0.15px #dedede;">50%</div>
<div class="t" style="left:359.90px;top:501.16px;font-size:6.9px;line-height:6.9px;color:#dedede;-webkit-text-stroke:0.15px #dedede;">60%</div>
<div class="t" style="left:398.60px;top:501.16px;font-size:6.9px;line-height:6.9px;color:#dedede;-webkit-text-stroke:0.15px #dedede;">70%</div>
<div class="t" style="left:437.30px;top:501.16px;font-size:6.9px;line-height:6.9px;color:#dedede;-webkit-text-stroke:0.15px #dedede;">80%</div>
<div class="t" style="left:476.00px;top:501.16px;font-size:6.9px;line-height:6.9px;color:#dedede;-webkit-text-stroke:0.15px #dedede;">90%</div>
<div class="t" style="left:494.20px;top:501.16px;font-size:6.9px;line-height:6.9px;color:#dedede;-webkit-text-stroke:0.15px #dedede;">100%</div>
<div class="t" style="left:460.80px;top:455.04px;font-size:6.1px;line-height:6.1px;color:#84c474;-webkit-text-stroke:0.05px currentColor;">Samsung SSD 840</div>
<div class="t" style="left:460.80px;top:460.24px;font-size:6.1px;line-height:6.1px;color:#84c474;-webkit-text-stroke:0.05px currentColor;">DXT0</div>
<div class="t" style="left:460.80px;top:465.44px;font-size:6.1px;line-height:6.1px;color:#84c474;-webkit-text-stroke:0.05px currentColor;">iaStor</div>
<div class="t" style="left:460.80px;top:471.04px;font-size:6.1px;line-height:6.1px;color:#84c474;-webkit-text-stroke:0.05px currentColor;">232.88 GB</div>
<div class="t" style="left:482.50px;top:479.64px;font-size:6.1px;line-height:6.1px;color:#84c474;-webkit-text-stroke:0.05px currentColor;">Read</div>
<div class="t" style="left:482.50px;top:484.84px;font-size:6.1px;line-height:6.1px;color:#84c474;-webkit-text-stroke:0.05px currentColor;">Write</div>
<div style="position:absolute;left:205.4px;top:512px;width:81.1px;height:8.600000000000023px;border:1px solid #8c8c8c;border-radius:2px;background:linear-gradient(#f6f6f6 0%,#ececec 48%,#dddddd 52%,#d2d2d2 100%);box-shadow:inset 0 0 0 1px rgba(255,255,255,0.7);"></div>
<div class="t" style="left:205.40px;top:513.97px;width:83.1px;text-align:center;font-size:7px;line-height:7px;color:#111;-webkit-text-stroke:0.05px currentColor;">Start</div>
<div style="position:absolute;left:300.4px;top:511.8px;width:82.0px;height:8.599999999999966px;border:1px solid #c0c0c0;border-radius:2px;background:#f4f4f4;"></div>
<div class="t" style="left:300.40px;top:513.77px;width:84.0px;text-align:center;font-size:7px;line-height:7px;color:#a0a0a0;-webkit-text-stroke:0.05px currentColor;">Abort</div>
<svg style="position:absolute;left:0;top:0" width="600" height="542" viewBox="0 0 600 542"><path d="M539,516.5 L550,516.5 Q548.5,520 545.5,522 M544.5,519.5 Q544.5,526 539.5,529.5 M553,516 L562,516 Q558,524 552,529.5 M557.5,523 L563.5,529.5 M566,519 L575,518 M565,523.5 L576,522.5 M569.5,514.5 L571.5,530 M577,523 L588.5,523" fill="none" stroke="rgba(150,200,225,0.6)" stroke-width="4.4" stroke-linecap="square"/><path d="M539,516.5 L550,516.5 Q548.5,520 545.5,522 M544.5,519.5 Q544.5,526 539.5,529.5 M553,516 L562,516 Q558,524 552,529.5 M557.5,523 L563.5,529.5 M566,519 L575,518 M565,523.5 L576,522.5 M569.5,514.5 L571.5,530 M577,523 L588.5,523" fill="none" stroke="#0075a4" stroke-width="2.6" stroke-linecap="square"/><g fill="none" stroke="rgba(170,208,226,0.85)" stroke-width="2.1"><path d="M519.5,514.5 V525 M519.5,514.5 H525.5 V525 M520.5,517.5 H524.5 M522.5,515 V520 M520.5,520 H524.5 M521,522 H524 V524 H521 Z"/><path d="M514.5,514.5 L516.5,516.5 M514,519 H517 V526 Q519,530 526,529.5"/></g><g fill="none" stroke="rgba(170,208,226,0.85)" stroke-width="2.1"><path d="M527,515.5 H533 M526.5,520.5 H533.5 M530,515.5 V530 M534.5,516 V526 M537,514.5 V530 Q537,530.5 535.5,530"/></g></svg>
</div></body></html>
